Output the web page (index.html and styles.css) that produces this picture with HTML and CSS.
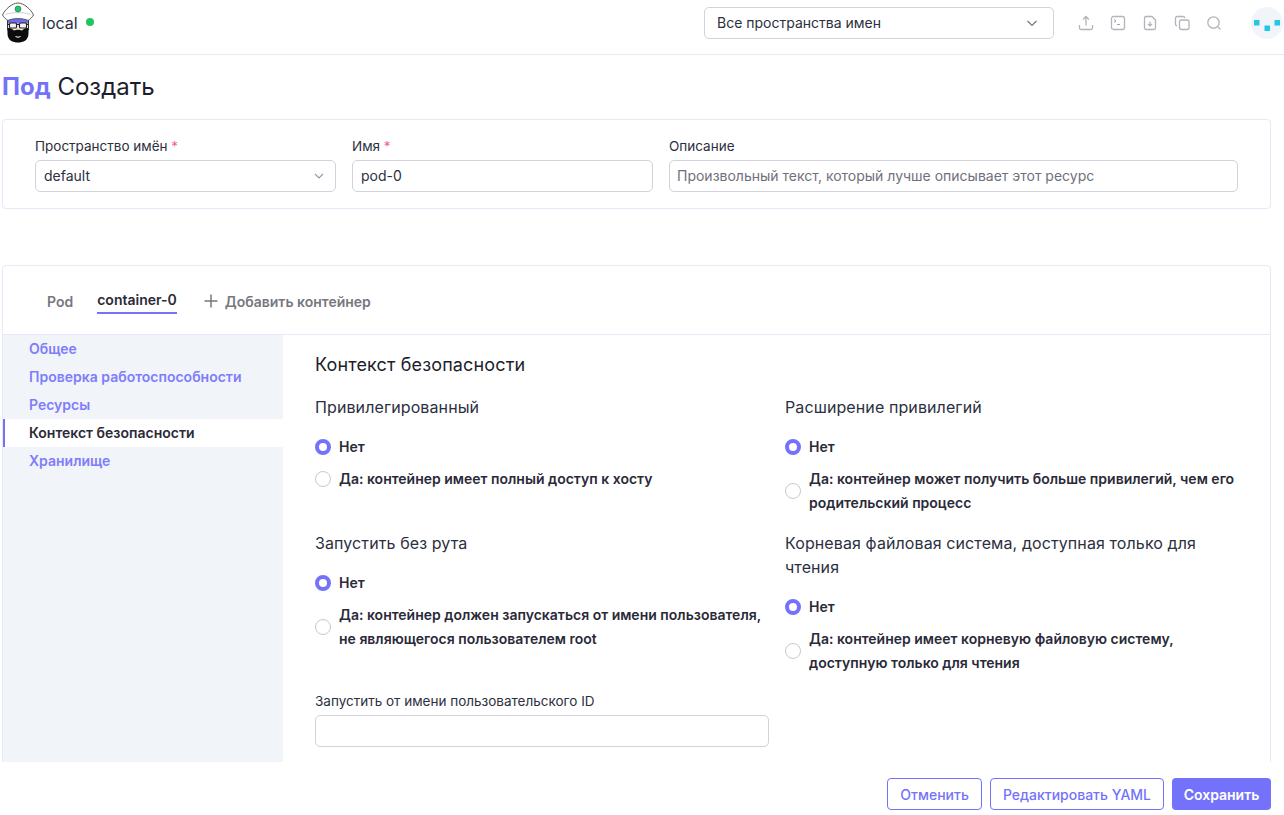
FILE: index.html
```html
<!DOCTYPE html>
<html lang="en">
<head>
  <meta charset="UTF-8">
  <title>Под Создать</title>
  <link rel="stylesheet" href="styles.css">
</head>
<body>
  <header class="topbar">
    <div class="cluster">
      <svg class="logo" width="36" height="44" viewBox="0 .5 36 44">
        <path d="M7 19 H29 V30 H7 Z" fill="#f2e8dc"/>
        <path d="M8 17 H28 V23 H8 Z" fill="#6f6cf0"/>
        <path d="M7.500 28 C9 27 12 28 14 30 C16 29 20 29 22 30 C24 28 27 27 28.500 28 V33 C28.500 40 23 42 18 42 C13 42 7.500 40 7.500 33 Z" fill="#0c0c0c"/>
        <path d="M7.500 18 V30 M28.500 18 V30" stroke="#333" fill="none"/>
        <rect x="9.500" y="22.500" width="7" height="5" rx="1" fill="#f4f2f0" stroke="#222" stroke-width="1.100"/>
        <rect x="19.500" y="22.500" width="7" height="5" rx="1" fill="#f4f2f0" stroke="#222" stroke-width="1.100"/>
        <path d="M7.500 24 H9.500 M16.500 24 H19.500 M26.500 24 H28.500" stroke="#222"/>
        <path d="M15.500 36 Q18 37.500 20.500 36" stroke="#fff" fill="none"/>
        <path d="M18 2.500 C12 2.500 5 9 2.500 14.500 C4 17 6 19 8 20 C12 17.500 24 17.500 28 20 C30 19 32 17 33.500 14.500 C31 9 24 2.500 18 2.500 Z" fill="#fff" stroke="#4a4a4a" stroke-width=".9"/>
        <path d="M5.500 14 C12 11.500 24 11.500 30.500 14" fill="none" stroke="#bbb" stroke-width=".7"/>
        <circle cx="18" cy="8.500" r="3" fill="#1fc66a" stroke="#2a6a48" stroke-width=".6"/>
      </svg>
      <span class="cluster-name">local</span>
      <span class="status-dot"></span>
    </div>
    <div class="ns-select">
      <span>Все пространства имен</span>
      <svg width="12" height="12" viewBox="0 0 12 12"><path d="M1.500 4 L6 8.500 L10.500 4" fill="none" stroke="#777" stroke-width="1.200"/></svg>
    </div>
    <div class="actions">
      <svg width="16" height="16" viewBox="0 0 16 16"><path d="M8 10.500 V2 M5 4.500 L8 1.500 L11 4.500 M1.500 10 V13 Q1.500 14.500 3 14.500 H13 Q14.500 14.500 14.500 13 V10" fill="none" stroke="#b3b3ba" stroke-width="1.300"/></svg>
      <svg width="16" height="16" viewBox="0 0 16 16"><rect x="1.500" y="1.500" width="13" height="13" rx="2" fill="none" stroke="#b3b3ba" stroke-width="1.300"/><path d="M4 4.500 L6 6 L4 7.500 M7 9.500 H10" fill="none" stroke="#a0a0a8"/></svg>
      <svg width="16" height="16" viewBox="0 0 16 16"><path d="M10 1.500 H4 Q2.500 1.500 2.500 3 V13 Q2.500 14.500 4 14.500 H12 Q13.500 14.500 13.500 13 V5 L10 1.500 Z" fill="none" stroke="#b3b3ba" stroke-width="1.300"/><path d="M8 6.500 V11 M6 9 L8 11 L10 9" fill="none" stroke="#b3b3ba" stroke-width="1.200"/></svg>
      <svg width="16" height="16" viewBox="0 0 16 16"><rect x="5.500" y="5" width="9.500" height="9.500" rx="2" fill="none" stroke="#b3b3ba" stroke-width="1.300"/><path d="M3 11 Q1.500 10.500 1.500 9 V3.500 Q1.500 1.500 3.500 1.500 H9 Q10.500 1.500 11 3" fill="none" stroke="#b3b3ba" stroke-width="1.300"/></svg>
      <svg width="16" height="16" viewBox="0 0 16 16"><circle cx="7.500" cy="7.500" r="5.700" fill="none" stroke="#b3b3ba" stroke-width="1.300"/><path d="M12 12 L14.500 14.500" stroke="#b3b3ba" stroke-width="1.300"/></svg>
    </div>
    <div class="avatar">
      <svg width="32" height="32" viewBox="0 0 32 32"><rect x="3" y="13" width="5.500" height="5.500" fill="#22c7e0"/><rect x="13.500" y="18.500" width="5.500" height="5.500" fill="#22c7e0"/><rect x="23.500" y="13" width="5.500" height="5.500" fill="#22c7e0"/></svg>
    </div>
  </header>

  <main class="content">
    <div class="page-title"><b>Под</b> Создать</div>

    <section class="card meta">
      <div class="field ns">
        <label>Пространство имён <i>*</i></label>
        <div class="input select"><span>default</span>
          <svg width="12" height="12" viewBox="0 0 12 12"><path d="M2 4 L6 8 L10 4" fill="none" stroke="#999" stroke-width="1.100"/></svg>
        </div>
      </div>
      <div class="field name">
        <label>Имя <i>*</i></label>
        <div class="input">pod-0</div>
      </div>
      <div class="field desc">
        <label>Описание</label>
        <div class="input placeholder">Произвольный текст, который лучше описывает этот ресурс</div>
      </div>
    </section>

    <section class="card editor">
      <div class="tabs">
        <span class="tab">Pod</span>
        <span class="tab active">container-0</span>
        <span class="tab add">
          <svg width="14" height="14" viewBox="0 0 14 14"><path d="M7 .5 V13.500 M.5 7 H13.500" stroke="#77777f" stroke-width="1.500"/></svg>
          Добавить контейнер
        </span>
      </div>
      <div class="split">
        <nav class="side">
          <a>Общее</a>
          <a>Проверка работоспособности</a>
          <a>Ресурсы</a>
          <a class="current">Контекст безопасности</a>
          <a>Хранилище</a>
        </nav>
        <div class="pane">
          <h3>Контекст безопасности</h3>
          <div class="options">
            <div class="group">
              <h4>Привилегированный</h4>
              <div class="radio on"><span class="mark"></span><span>Нет</span></div>
              <div class="radio"><span class="mark"></span><span>Да: контейнер имеет полный доступ к хосту</span></div>
            </div>
            <div class="group">
              <h4>Расширение привилегий</h4>
              <div class="radio on"><span class="mark"></span><span>Нет</span></div>
              <div class="radio"><span class="mark"></span><span>Да: контейнер может получить больше привилегий, чем его родительский процесс</span></div>
            </div>
            <div class="group">
              <h4>Запустить без рута</h4>
              <div class="radio on"><span class="mark"></span><span>Нет</span></div>
              <div class="radio"><span class="mark"></span><span>Да: контейнер должен запускаться от имени пользователя, не являющегося пользователем root</span></div>
              <div class="field uid">
                <label>Запустить от имени пользовательского ID</label>
                <div class="input"></div>
              </div>
            </div>
            <div class="group">
              <h4>Корневая файловая система, доступная только для чтения</h4>
              <div class="radio on"><span class="mark"></span><span>Нет</span></div>
              <div class="radio"><span class="mark"></span><span>Да: контейнер имеет корневую файловую систему, доступную только для чтения</span></div>
            </div>
          </div>
        </div>
      </div>
    </section>
  </main>

  <footer class="footer">
    <button class="btn">Отменить</button>
    <button class="btn">Редактировать YAML</button>
    <button class="btn primary">Сохранить</button>
  </footer>
</body>
</html>
```

FILE: styles.css
```css
* {
  box-sizing: border-box;
}

html, body {
  height: 100%;
}

body {
  margin: 0;
  display: flex;
  flex-direction: column;
  overflow: hidden;
  font-family: Inter, "Noto Sans", sans-serif;
  font-size: 14px;
  color: #1d1d2b;
  background: #fff;
}

.topbar {
  flex: none;
  height: 55px;
  display: flex;
  align-items: center;
  padding-bottom: 8px;
  border-bottom: 1px solid #e8e8f6;
}

.cluster {
  display: flex;
  align-items: center;
  width: 704px;
}

.logo {
  flex: none;
}

.cluster-name {
  margin-left: 6px;
  font-size: 16px;
  color: #2c3040;
}

.status-dot {
  width: 8px;
  height: 8px;
  margin-left: 8px;
  margin-bottom: 2px;
  border-radius: 50%;
  background: #22c55e;
}

.ns-select {
  width: 350px;
  height: 32px;
  display: flex;
  align-items: center;
  justify-content: space-between;
  padding: 0 15px 1px 12px;
  border: 1px solid #d2d2dc;
  border-radius: 5px;
  color: #2c3040;
}

.actions {
  display: flex;
  gap: 16px;
  margin-left: 24px;
}

.avatar {
  width: 32px;
  height: 32px;
  margin-left: 29px;
  border-radius: 50%;
  background: #f1f4f9;
}

.avatar svg {
  display: block;
}

.content {
  flex: 1;
  min-height: 0;
  overflow: hidden;
  padding: 0 13px 0 2px;
}

.page-title {
  height: 64px;
  padding-top: 16px;
  font-size: 24px;
  line-height: 32px;
  color: #1d1d2b;
}

.page-title b {
  font-weight: 700;
  color: #7472fa;
}

.card {
  border: 1px solid #e8e8f6;
  border-radius: 4px;
  background: #fff;
}

.meta {
  height: 90px;
  display: flex;
  gap: 16px;
  padding: 16px 32px 0;
}

.field label {
  display: block;
  height: 24px;
  font-size: 13.5px;
  line-height: 20px;
  color: #2c3040;
}

.field label i {
  font-style: normal;
  color: #f0609a;
}

.ns {
  width: 301px;
}

.name {
  width: 301px;
}

.desc {
  flex: 1;
}

.input {
  height: 32px;
  display: flex;
  align-items: center;
  justify-content: space-between;
  padding: 0 8px 1px;
  border: 1px solid #d2d2dc;
  border-radius: 5px;
  color: #2c3040;
}

.select {
  padding-right: 10px;
}

.placeholder {
  padding-left: 7px;
  color: #70707c;
}

.editor {
  margin-top: 56px;
}

.tabs {
  height: 69px;
  display: flex;
  align-items: center;
  padding: 2px 44px 0;
  gap: 24px;
  border-bottom: 1px solid #e8e8f6;
}

.tab {
  font-weight: 600;
  color: #77777f;
}

.tab.active {
  height: 28px;
  line-height: 28px;
  margin-bottom: 2px;
  color: #2a2a38;
  border-bottom: 2px solid #7472fa;
}

.tab.add {
  display: flex;
  align-items: center;
  gap: 7px;
  margin-left: 3px;
}

.split {
  display: flex;
  height: 600px;
}

.side {
  flex: none;
  width: 280px;
  background: #f1f4f9;
}

.side a {
  display: block;
  height: 28px;
  line-height: 28px;
  padding-left: 26px;
  font-weight: 600;
  color: #7f7dfa;
}

.side a.current {
  padding-left: 24px;
  border-left: 2px solid #7472fa;
  color: #2a2a38;
  background: #fff;
}

.pane {
  flex: 1;
  padding: 18px 31px 0 32px;
}

.pane h3 {
  margin: 0 0 18px;
  font-size: 18px;
  line-height: 24px;
  font-weight: 400;
  letter-spacing: .14px;
}

.options {
  display: grid;
  grid-template-columns: 454px 454px;
  column-gap: 16px;
}

.group {
  padding-bottom: 12px;
}

.group h4 {
  margin: 0 0 12px;
  font-size: 16px;
  line-height: 24px;
  font-weight: 400;
  letter-spacing: .1px;
  color: #2c3040;
}

.radio {
  display: flex;
  align-items: center;
  gap: 8px;
  padding: 4px 0;
  line-height: 24px;
  font-weight: 600;
  color: #2a2a38;
}

.mark {
  flex: none;
  width: 16px;
  height: 16px;
  border: 1px solid #c8c8d2;
  border-radius: 50%;
  background: #fff;
}

.radio.on .mark {
  border: 4px solid #7472fa;
}

.uid {
  margin-top: 36px;
}

.footer {
  flex: none;
  height: 53px;
  display: flex;
  justify-content: flex-end;
  gap: 8px;
  padding: 16px 13px 0 0;
  background: #fff;
}

.btn {
  height: 32px;
  padding: 0 12px;
  border: 1px solid #7472fa;
  border-radius: 4px;
  font: 500 14px Inter, sans-serif;
  color: #7472fa;
  background: #fff;
}

.btn.primary {
  width: 99px;
  padding: 0;
  border: 0;
  font-weight: 600;
  color: #fff;
  background: #7472fa;
}
```
